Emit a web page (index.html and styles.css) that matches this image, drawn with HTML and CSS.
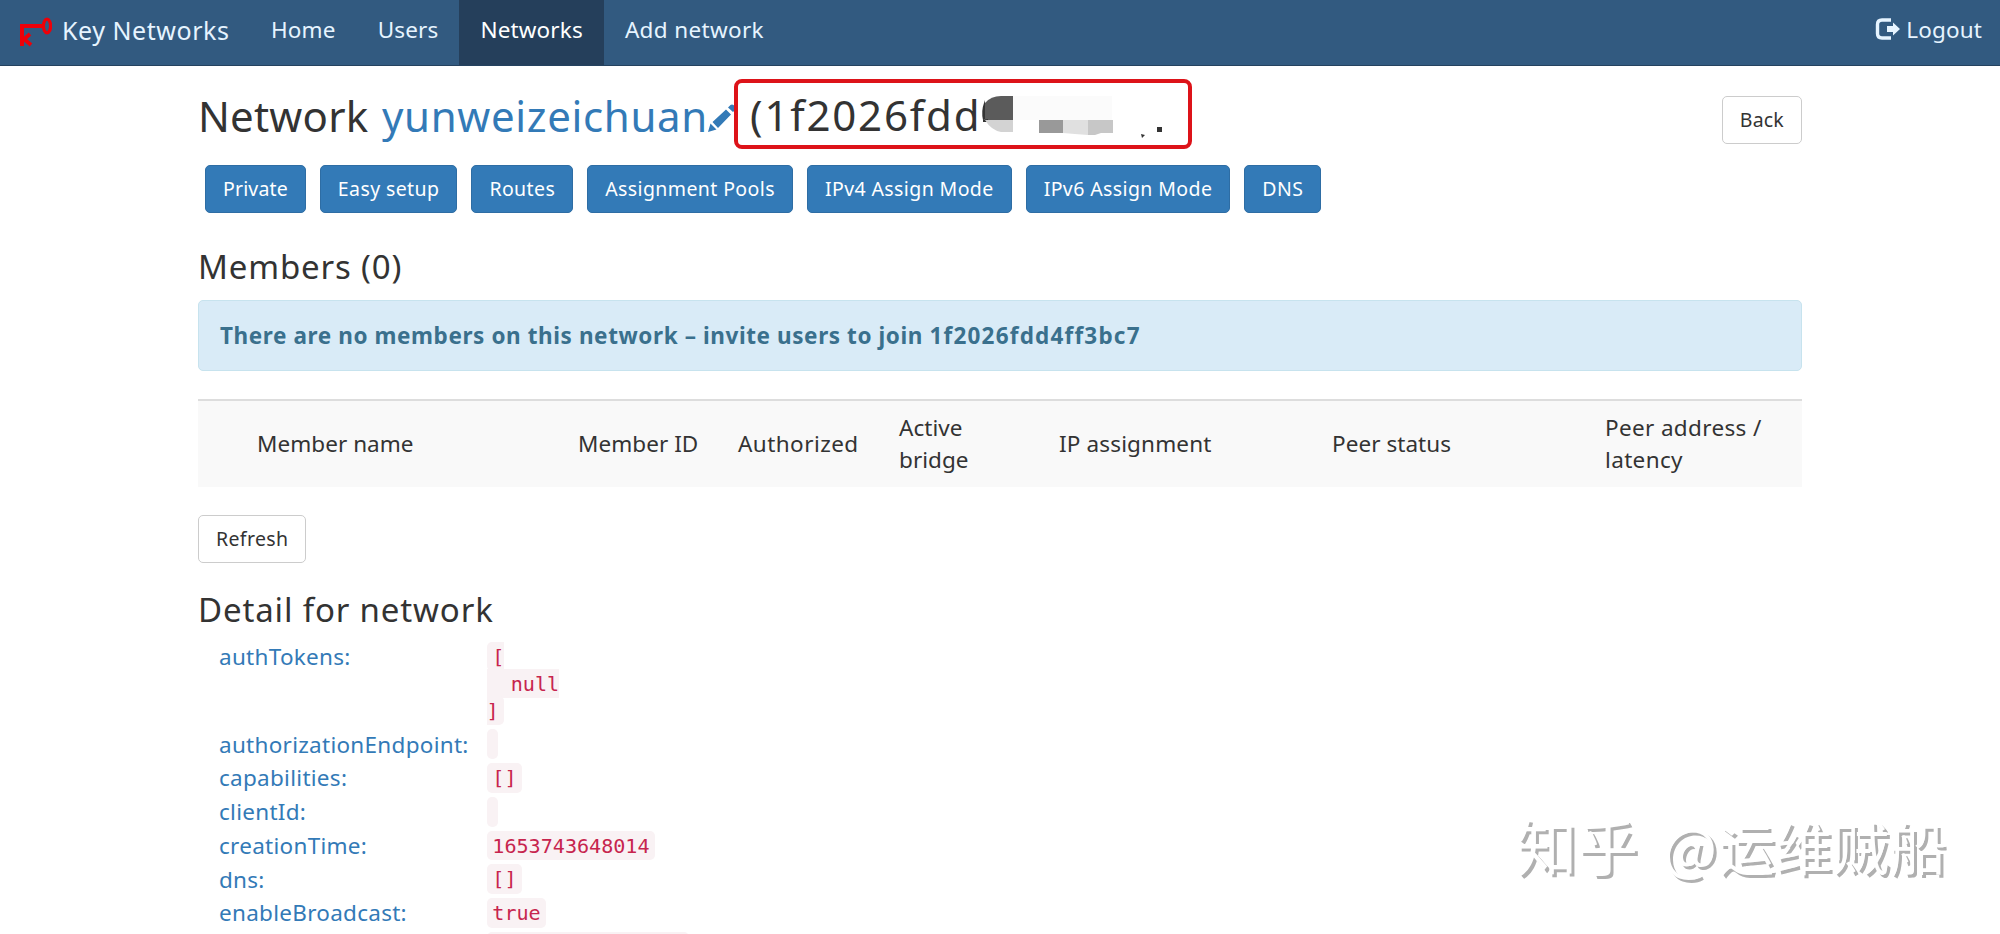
FILE: index.html
```
<!DOCTYPE html>
<html lang="en">
<head>
  <meta charset="UTF-8">
  <meta name="viewport" content="width=device-width, initial-scale=1.0">
  <title>Network yunweizeichuan</title>
  <link rel="stylesheet" href="styles.css">
</head>
<body>
  <nav class="navbar">
    <a class="brand" href="#">
      <svg class="brand-logo" width="34" height="30" viewBox="0 0 34 30" fill="none" stroke="#ee0008">
        <path d="M4 29V9H25" stroke-width="4"/>
        <ellipse cx="29" cy="9" rx="3.6" ry="6.8" stroke-width="3.2"/>
        <path d="M12 17L4 24M6 22l7 6" stroke-width="3.8"/>
      </svg>
      <span>Key Networks</span>
    </a>
    <ul class="nav">
      <li><a href="#">Home</a></li>
      <li><a href="#">Users</a></li>
      <li class="active"><a href="#">Networks</a></li>
      <li><a class="nav-add" href="#">Add network</a></li>
    </ul>
    <a class="logout" href="#">
      <svg width="26" height="22" viewBox="0 0 26 22">
        <path d="M16 2H7Q2.5 2 2.5 6.5V15.5Q2.5 20 7 20H16" fill="none" stroke="#e6f4ff" stroke-width="3.4"/>
        <path d="M12 8h6V4.500L25 11l-7 6.500V14h-6z" fill="#e6f4ff"/>
      </svg>
      <span>Logout</span>
    </a>
  </nav>

  <div class="container">
    <div class="title-row">
      <h1>
        <span class="title-label">Network</span>
        <a class="network-name" href="#">yunweizeichuan</a>
        <svg class="pencil" width="28" height="28" viewBox="0 0 28 28" fill="#337ab7">
          <path d="M0 28l2.500-8.500 6 6zM4.500 18L18 5.500l5 5L10 24zM20 3.500l2.500-2.500q1.500-1 3 0l2 2q1 1.500 0 2.500L25 8z"/>
        </svg>
        <span class="network-id">
          <span class="id-text">(1f2026fdd</span>
          <svg class="mosaic" width="184" height="46" viewBox="0 0 184 46">
            <path d="M34 1h99v24H34z" fill="#fbfbfb"/>
            <path d="M6 25V8Q12 1 22 1h12v24z" fill="#5b5b5b"/>
            <path d="M5 8q-3 8-1 17h2V5zM4 25l5-1v3H4z" fill="#333"/>
            <path d="M6 25h28v12H22Q12 35 6 25z" fill="#d3d3d3"/>
            <path d="M60 25h24v13H60z" fill="#999"/>
            <path d="M84 25h25v15q-14-1-25-2z" fill="#e0e0e0"/>
            <path d="M109 25h25v13h-12l-6 2h-7z" fill="#c7c7c7"/>
            <path d="M162 39l4 1-3 3z" fill="#333"/>
            <path d="M178 32h5v5h-5z" fill="#333"/>
          </svg>
        </span>
      </h1>
      <button class="btn btn-back">Back</button>
    </div>

    <div class="toolbar">
      <button class="btn btn-primary btn-private">Private</button>
      <button class="btn btn-primary">Easy setup</button>
      <button class="btn btn-primary">Routes</button>
      <button class="btn btn-primary">Assignment Pools</button>
      <button class="btn btn-primary">IPv4 Assign Mode</button>
      <button class="btn btn-primary">IPv6 Assign Mode</button>
      <button class="btn btn-primary">DNS</button>
    </div>

    <h3 class="members-title">Members (0)</h3>
    <div class="alert">There are no members on this network – invite users to join <span class="alert-id">1f2026fdd4ff3bc7</span></div>

    <div class="table-head">
      <div></div>
      <div>Member name</div>
      <div>Member ID</div>
      <div class="authorized">Authorized</div>
      <div>Active<br>bridge</div>
      <div class="assignment">IP assignment</div>
      <div>Peer status</div>
      <div class="address">Peer address /<br>latency</div>
    </div>

    <button class="btn btn-refresh">Refresh</button>

    <h3 class="detail-title">Detail for network</h3>
    <dl class="details">
      <dt>authTokens:</dt>
      <dd><code>[
  null
]</code></dd>
      <dt>authorizationEndpoint:</dt>
      <dd><code></code></dd>
      <dt>capabilities:</dt>
      <dd><code>[]</code></dd>
      <dt>clientId:</dt>
      <dd><code></code></dd>
      <dt>creationTime:</dt>
      <dd><code>1653743648014</code></dd>
      <dt>dns:</dt>
      <dd><code>[]</code></dd>
      <dt>enableBroadcast:</dt>
      <dd><code>true</code></dd>
      <dt></dt>
      <dd><code class="clipped"></code></dd>
    </dl>
  </div>

  <div class="watermark"><span class="site">知乎</span><span class="at">@</span><span>运维贼船</span></div>
</body>
</html>
```

FILE: styles.css
```
* {
  margin: 0;
  padding: 0;
  box-sizing: border-box;
}

body {
  position: relative;
  height: 934px;
  overflow: hidden;
  background: #fff;
  color: #333;
  font-family: "Noto Sans", "Open Sans", sans-serif;
  font-size: 22.5px;
}

a {
  color: #337ab7;
  text-decoration: none;
}

.navbar {
  display: flex;
  height: 66px;
  padding: 0 18px;
  background: #325a80;
  border-bottom: 1px solid #25425f;
}

.navbar a {
  display: flex;
  color: #e6f4ff;
  line-height: 60px;
  letter-spacing: 0.15px;
  white-space: nowrap;
}

.brand {
  width: 232px;
  font-size: 25px;
}

.navbar .brand {
  line-height: 61px;
  letter-spacing: 0.55px;
}

.brand-logo {
  margin: 17px 10px 0 0;
}

.nav {
  display: flex;
  list-style: none;
}

.nav a {
  height: 65px;
  padding: 0 21px;
}

.nav .active a {
  background: #253f5b;
  color: #fff;
}

.nav .nav-add {
  letter-spacing: 0.35px;
}

.logout {
  margin-left: auto;
}

.logout svg {
  margin: 18px 5px 0 0;
}

.container {
  width: 1604px;
  margin: 0 auto;
}

.title-row {
  display: flex;
  justify-content: space-between;
  height: 99px;
}

h1 {
  display: flex;
  height: 99px;
  font-size: 42px;
  font-weight: 400;
  line-height: 99px;
  white-space: nowrap;
}

.title-label {
  width: 184px;
  letter-spacing: 0.2px;
}

.network-name {
  width: 326px;
  letter-spacing: 0.65px;
}

.pencil {
  margin-top: 38px;
}

.network-id {
  display: flex;
  width: 458px;
  height: 70px;
  margin: 13px 0 0 -2px;
  padding-left: 12px;
  border: 4px solid #dd1319;
  border-radius: 8px;
  line-height: 64px;
}

.id-text {
  width: 229px;
  letter-spacing: 1.8px;
}

.mosaic {
  margin-top: 12px;
}

.btn {
  height: 48px;
  padding: 0 17px 1px;
  background: #fff;
  border: 1px solid #ccc;
  border-radius: 5px;
  color: #333;
  font-family: inherit;
  font-size: 19.5px;
  letter-spacing: 0.2px;
  white-space: nowrap;
}

.btn-back {
  margin-top: 30px;
}

.toolbar {
  display: flex;
  gap: 14px;
  padding-left: 7px;
}

.btn-primary {
  background: #337ab7;
  border-color: #2e6da4;
  color: #fff;
  letter-spacing: 0.4px;
}

.btn-private {
  letter-spacing: 0.15px;
}

h3 {
  font-size: 33px;
  font-weight: 400;
  letter-spacing: 0.85px;
  line-height: 36px;
}

.members-title {
  margin-top: 36px;
}

.alert {
  height: 71px;
  margin-top: 15px;
  padding-left: 21px;
  background: #d9ebf7;
  border: 1px solid #c7e3ee;
  border-radius: 5px;
  color: #3a708d;
  font-weight: 700;
  letter-spacing: 0.59px;
  line-height: 69px;
}

.alert-id {
  letter-spacing: 1.2px;
}

.table-head {
  display: grid;
  grid-template-columns: 48px 321px 160px 161px 160px 273px 273px 1fr;
  align-items: center;
  height: 88px;
  margin-top: 28px;
  background: #f9f9f9;
  border-top: 2px solid #ddd;
  line-height: 32px;
}

.table-head div {
  padding-left: 11px;
  letter-spacing: 0.05px;
}

.table-head .authorized {
  letter-spacing: 0.45px;
}

.table-head .assignment {
  letter-spacing: 0.15px;
}

.table-head .address {
  letter-spacing: 0.35px;
}

.btn-refresh {
  display: block;
  margin-top: 28px;
  letter-spacing: 0.35px;
}

.detail-title {
  margin-top: 29px;
}

.details {
  display: grid;
  grid-template-columns: 288.5px 1fr;
  margin-top: 12px;
}

dt {
  padding-left: 21px;
  color: #337ab7;
  letter-spacing: 0.28px;
  line-height: 33.7px;
}

dd {
  padding: 3.6px 0 3.1px;
  font-family: "DejaVu Sans Mono", monospace;
  font-size: 20.1px;
  line-height: 27px;
}

code {
  padding: 2.9px 5.8px;
  background: #f9f2f4;
  border-radius: 5px;
  color: #c7254e;
  font-family: inherit;
  font-size: inherit;
  white-space: pre-wrap;
}

.clipped {
  padding: 2.9px 101px;
}

.watermark {
  position: absolute;
  right: 54px;
  bottom: 49px;
  display: flex;
  color: #fff;
  font-family: "Noto Sans CJK SC", sans-serif;
  font-size: 57px;
  line-height: 80px;
  text-shadow: 3px 3px 0 #b0b0b0;
}

.watermark .site {
  width: 147px;
  font-size: 61px;
}

.watermark .at {
  width: 55px;
}
```
